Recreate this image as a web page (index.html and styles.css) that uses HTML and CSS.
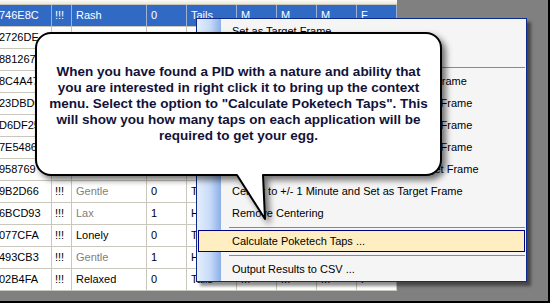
FILE: index.html
```html
<!DOCTYPE html>
<html>
<head>
<meta charset="utf-8">
<link rel="stylesheet" href="styles.css">
</head>
<body>
<div class="screen">
  <div class="grid">
    <div class="hdr"></div>
    <div class="row sel"><div class="c pid">746E8C</div><div class="c bang">!!!</div><div class="c">Rash</div><div class="c">0</div><div class="c">Tails</div><div class="c">M</div><div class="c">M</div><div class="c">M</div><div class="c">F</div></div>
    <div class="row"><div class="c pid">2726DE</div><div class="c bang">!!!</div><div class="c">Hardy</div><div class="c">0</div><div class="c">Tails</div><div class="c">M</div><div class="c">M</div><div class="c">M</div><div class="c">F</div></div>
    <div class="row"><div class="c pid">881267</div><div class="c bang">!!!</div><div class="c">Bold</div><div class="c">1</div><div class="c">Heads</div><div class="c">M</div><div class="c">M</div><div class="c">M</div><div class="c">F</div></div>
    <div class="row"><div class="c pid">8C4A47</div><div class="c bang">!!!</div><div class="c">Calm</div><div class="c">0</div><div class="c">Tails</div><div class="c">M</div><div class="c">M</div><div class="c">M</div><div class="c">F</div></div>
    <div class="row"><div class="c pid">23DBD0</div><div class="c bang">!!!</div><div class="c">Modest</div><div class="c">1</div><div class="c">Heads</div><div class="c">M</div><div class="c">M</div><div class="c">M</div><div class="c">F</div></div>
    <div class="row"><div class="c pid">D6DF25</div><div class="c bang">!!!</div><div class="c">Timid</div><div class="c">0</div><div class="c">Tails</div><div class="c">M</div><div class="c">M</div><div class="c">M</div><div class="c">F</div></div>
    <div class="row"><div class="c pid">7E5486</div><div class="c bang">!!!</div><div class="c">Jolly</div><div class="c">1</div><div class="c">Heads</div><div class="c">M</div><div class="c">M</div><div class="c">M</div><div class="c">F</div></div>
    <div class="row"><div class="c pid">958769</div><div class="c bang">!!!</div><div class="c">Quiet</div><div class="c">0</div><div class="c">Tails</div><div class="c">M</div><div class="c">M</div><div class="c">M</div><div class="c">F</div></div>
    <div class="row"><div class="c pid">9B2D66</div><div class="c bang">!!!</div><div class="c dim">Gentle</div><div class="c">0</div><div class="c">Tails</div><div class="c">M</div><div class="c">M</div><div class="c">M</div><div class="c">F</div></div>
    <div class="row"><div class="c pid">6BCD93</div><div class="c bang">!!!</div><div class="c dim">Lax</div><div class="c">1</div><div class="c">Heads</div><div class="c">M</div><div class="c">M</div><div class="c">M</div><div class="c">F</div></div>
    <div class="row"><div class="c pid">077CFA</div><div class="c bang">!!!</div><div class="c">Lonely</div><div class="c">0</div><div class="c">Tails</div><div class="c">M</div><div class="c">M</div><div class="c">M</div><div class="c">F</div></div>
    <div class="row"><div class="c pid">493CB3</div><div class="c bang">!!!</div><div class="c dim">Gentle</div><div class="c">1</div><div class="c">Heads</div><div class="c">M</div><div class="c">M</div><div class="c">M</div><div class="c">F</div></div>
    <div class="row"><div class="c pid">02B4FA</div><div class="c bang">!!!</div><div class="c">Relaxed</div><div class="c">0</div><div class="c">Tails</div><div class="c">M</div><div class="c">M</div><div class="c">M</div><div class="c">F</div></div>
  </div>

  <div class="menu">
    <div class="item">Set as Target Frame</div>
    <div class="item">Copy Seed to Clipboard</div>
    <div class="sep"></div>
    <div class="item">Center to +/- 1 Second and Set as Target Frame</div>
    <div class="item">Center to +/- 2 Seconds and Set as Target Frame</div>
    <div class="item">Center to +/- 3 Seconds and Set as Target Frame</div>
    <div class="item">Center to +/- 5 Seconds and Set as Target Frame</div>
    <div class="item">Center to +/- 10 Seconds and Set as Target Frame</div>
    <div class="item">Center to +/- 1 Minute and Set as Target Frame</div>
    <div class="item">Remove Centering</div>
    <div class="sep"></div>
    <div class="item hot">Calculate Poketech Taps ...</div>
    <div class="sep"></div>
    <div class="item">Output Results to CSV ...</div>
  </div>

  <svg class="bubble" width="550" height="303" viewBox="0 0 550 303">
    <path d="M51 33 H426 A15 15 0 0 1 441 48 V160 A15 15 0 0 1 426 175 H263 L265 219 L237 175 H51 A15 15 0 0 1 36 160 V48 A15 15 0 0 1 51 33 Z" fill="#ffffff" stroke="#000000" stroke-width="2" stroke-linejoin="round"/>
  </svg>
  <div class="note">When you have found a PID with a nature and ability that<br>you are interested in right click it to bring up the context<br>menu. Select the option to "Calculate Poketech Taps". This<br>will show you how many taps on each application will be<br>required to get your egg.</div>
</div>
</body>
</html>
```

FILE: styles.css
```css
html, body {
  margin: 0;
  padding: 0;
}

.screen {
  position: relative;
  width: 550px;
  height: 303px;
  box-sizing: border-box;
  border-right: 2px solid #000;
  border-bottom: 2px solid #000;
  background: #808080;
  overflow: hidden;
  font-family: "Liberation Sans", Arial, sans-serif;
}

.grid {
  width: 397px;
  background: #fff;
}

.hdr {
  height: 4px;
  background: linear-gradient(#fbfaf6, #ebe9dc);
  border-bottom: 1px solid #cbc7b8;
}

.row {
  display: grid;
  grid-template-columns: 52px 20px 75px 40px 50px 40px 40px 40px 40px;
  height: 22px;
}

.c {
  box-sizing: border-box;
  height: 22px;
  line-height: 21px;
  padding-left: 4px;
  border-right: 1px solid #cac7bd;
  border-bottom: 1px solid #cac7bd;
  font-size: 11px;
  color: #000;
  white-space: nowrap;
  overflow: hidden;
}

.c.pid {
  padding-left: 0;
  text-indent: -1px;
}

.c.bang {
  padding-left: 3px;
}

.c.dim {
  color: #808080;
}

.row.sel .c {
  background: #316ac5;
  color: #fff;
  border-right-color: #9fb2d6;
}

.menu {
  position: absolute;
  left: 196px;
  top: 18px;
  width: 331px;
  box-sizing: border-box;
  padding: 1px 0;
  border: 1px solid #0b2a8a;
  background: linear-gradient(to right, #e6effd 0%, #c6daf8 55%, #8cafe6 100%) no-repeat 0 0 / 24px 100%, #f5f5f5;
  box-shadow: 4px 4px 3px rgba(0, 0, 0, 0.45);
}

.item {
  height: 22px;
  line-height: 22px;
  padding-left: 35px;
  font-size: 11px;
  color: #000;
  white-space: nowrap;
  overflow: hidden;
}

.item.hot {
  box-sizing: border-box;
  margin: 0 1px;
  padding-left: 33px;
  line-height: 20px;
  border: 1px solid #000080;
  background: #ffeec2;
}

.sep {
  height: 1px;
  margin: 3px 1px 2px 32px;
  background: #6d8bc7;
}

.bubble {
  position: absolute;
  left: 0;
  top: 0;
  overflow: visible;
  filter: drop-shadow(4px 4px 3px rgba(0, 0, 0, 0.55));
}

.note {
  position: absolute;
  left: 35px;
  top: 32px;
  width: 407px;
  padding-top: 32px;
  text-align: center;
  font-size: 13.5px;
  font-weight: bold;
  line-height: 16px;
  color: #121238;
  white-space: nowrap;
}
```
